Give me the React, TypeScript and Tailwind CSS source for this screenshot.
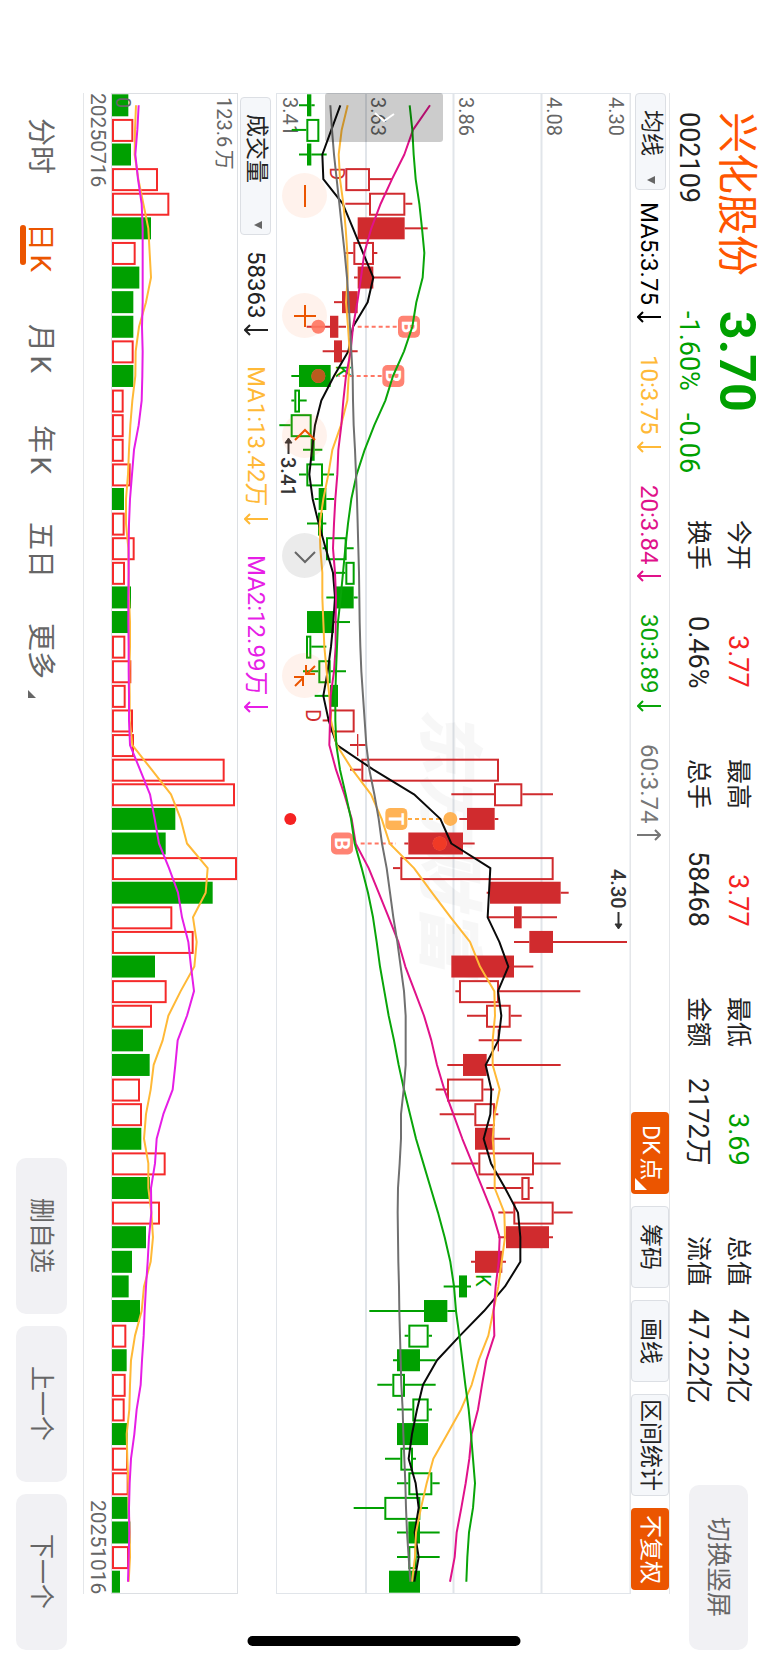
import type { ReactNode } from "react";

const ROW = 1501 / 61;
const rowCenter = (i: number) => ROW * i + ROW / 2;

const RED = "#d02b2e";
const GREEN = "#00a000";

// low, body start, body end, high (thirds of a unit), R/G = hollow, F/S = filled
type Candle = [number, number, number, number, "R" | "F" | "G" | "S"];

const candles: Candle[] = [
  [117, 141, 154, 164, "S"],
  [95, 139, 178, 178, "G"],
  [117, 141, 154, 200, "S"],
  [256, 256, 330, 396, "R"],
  [256, 327, 436, 457, "R"],
  [293, 293, 434, 503, "F"],
  [256, 280, 342, 352, "R"],
  [282, 293, 340, 422, "F"],
  [222, 246, 293, 293, "F"],
  [140, 210, 235, 258, "F"],
  [188, 222, 246, 293, "F"],
  [94, 117, 212, 212, "S"],
  [94, 103, 120, 140, "G"],
  [58, 92, 155, 155, "G"],
  [129, 152, 164, 187, "S"],
  [117, 139, 189, 222, "G"],
  [164, 176, 199, 222, "S"],
  [141, 174, 189, 199, "G"],
  [188, 198, 260, 281, "G"],
  [225, 256, 284, 284, "G"],
  [199, 228, 281, 293, "S"],
  [141, 141, 222, 270, "S"],
  [138, 138, 154, 199, "G"],
  [129, 175, 212, 258, "G"],
  [164, 210, 234, 234, "S"],
  [188, 210, 284, 284, "R"],
  [270, 291, 295, 317, "F"],
  [270, 304, 717, 717, "R"],
  [574, 702, 787, 879, "R"],
  [598, 621, 704, 715, "F"],
  [433, 445, 609, 644, "F"],
  [399, 421, 881, 881, "R"],
  [680, 690, 902, 926, "F"],
  [684, 762, 785, 891, "F"],
  [762, 808, 879, 1101, "F"],
  [574, 574, 762, 820, "F"],
  [586, 597, 717, 961, "R"],
  [621, 678, 752, 785, "R"],
  [656, 713, 717, 785, "F"],
  [562, 609, 680, 902, "F"],
  [527, 561, 670, 702, "R"],
  [539, 643, 705, 715, "R"],
  [645, 645, 703, 750, "F"],
  [574, 655, 822, 902, "R"],
  [679, 784, 809, 820, "R"],
  [715, 760, 881, 938, "R"],
  [715, 738, 867, 879, "F"],
  [633, 645, 727, 738, "F"],
  [551, 597, 621, 633, "S"],
  [328, 492, 562, 586, "S"],
  [434, 445, 506, 516, "G"],
  [399, 411, 480, 527, "S"],
  [352, 397, 435, 527, "G"],
  [411, 457, 506, 516, "G"],
  [411, 411, 504, 504, "S"],
  [375, 421, 459, 468, "G"],
  [411, 445, 517, 539, "G"],
  [281, 373, 481, 504, "G"],
  [411, 445, 480, 539, "S"],
  [411, 445, 470, 539, "G"],
  [387, 387, 480, 480, "S"],
];

const ma5 = [
  241, 214, 187, 190, 248, 279, 309, 340, 323, 279, 265, 222, 184, 165, 156,
  148, 158, 176, 197, 219, 225, 220, 213, 203, 190, 206, 231, 340, 462, 541,
  574, 691, 687, 683, 718, 745, 714, 724, 715, 677, 694, 691, 671, 693, 735,
  774, 781, 781, 735, 672, 600, 531, 489, 471, 456, 446, 467, 476, 464, 476,
  463,
];
const ma10 = [
  263, 245, 236, 240, 250, 257, 262, 263, 258, 264, 269, 266, 262, 243, 217,
  205, 190, 179, 181, 187, 187, 190, 193, 200, 208, 213, 230, 277, 333, 365,
  389, 462, 516, 572, 630, 660, 703, 705, 698, 698, 719, 704, 698, 704, 704,
  733, 735, 725, 715, 700, 685, 656, 635, 603, 562, 520, 500, 483, 468, 465,
  456,
];
const ma20 = [
  510, 459, 433, 396, 362, 334, 313, 303, 292, 279, 272, 258, 250, 244, 235,
  232, 226, 222, 219, 225, 228, 227, 227, 222, 212, 210, 208, 228, 253, 275,
  287, 326, 356, 386, 415, 436, 464, 492, 514, 531, 553, 580, 607, 637, 667,
  697, 719, 716, 707, 701, 703, 679, 666, 654, 635, 628, 617, 604, 590, 584,
  570,
];
const ma30 = [
  449, 457, 461, 467, 478, 486, 493, 488, 469, 457, 432, 399, 376, 343, 314,
  290, 274, 264, 256, 249, 242, 234, 231, 228, 226, 226, 229, 240, 257, 273,
  284, 305, 324, 339, 350, 360, 373, 386, 402, 416, 432, 450, 468, 490, 512,
  534, 554, 571, 582, 588, 598, 607, 616, 626, 633, 639, 645, 639, 627, 622,
  619,
];
const ma60 = [
  211, 216, 222, 230, 238, 246, 254, 261, 266, 270, 274, 278, 279, 281, 285,
  288, 291, 293, 295, 297, 298, 299, 301, 304, 309, 314, 319, 328, 343, 356,
  366, 380, 390, 400, 412, 422, 432, 437, 437, 437, 431, 423, 423, 419, 414,
  413, 414, 415, 417, 418, 420, 422, 424, 428, 430, 433, 436, 438, 441, 446,
  451,
];

const volumes: [number, "R" | "G"][] = [
  [385, "G"], [400, "R"], [393, "G"], [474, "R"], [508, "R"], [453, "G"],
  [407, "R"], [418, "G"], [400, "G"], [400, "G"], [401, "R"], [400, "G"],
  [371, "R"], [371, "R"], [371, "R"], [392, "R"], [372, "G"], [374, "R"],
  [404, "R"], [375, "R"], [393, "G"], [385, "G"], [376, "R"], [394, "R"],
  [377, "R"], [399, "R"], [402, "R"], [674, "R"], [705, "R"], [526, "G"],
  [497, "G"], [711, "R"], [638, "G"], [517, "R"], [581, "R"], [465, "G"],
  [500, "R"], [456, "R"], [429, "G"], [449, "G"], [420, "R"], [426, "R"],
  [424, "G"], [497, "R"], [450, "G"], [480, "R"], [438, "G"], [396, "G"],
  [386, "G"], [420, "G"], [379, "R"], [380, "G"], [377, "R"], [374, "R"],
  [383, "G"], [384, "R"], [386, "R"], [383, "G"], [391, "G"], [387, "R"],
  [360, "G"],
];
const volMa1 = [
  408, 405, 404, 415, 430, 445, 449, 453, 438, 417, 407, 406, 397, 391, 387,
  384, 378, 378, 385, 386, 387, 390, 390, 388, 389, 389, 397, 455, 513, 542,
  561, 623, 617, 579, 590, 583, 542, 505, 488, 461, 452, 438, 432, 445, 445,
  454, 459, 452, 432, 425, 405, 393, 390, 388, 380, 382, 385, 386, 389, 390,
  386,
];
const volMa2 = [
  416, 412, 406, 414, 425, 428, 428, 428, 428, 426, 428, 427, 425, 416, 402,
  396, 390, 387, 386, 386, 385, 385, 386, 386, 387, 387, 390, 420, 450, 464,
  477, 507, 534, 546, 565, 573, 582, 561, 533, 526, 518, 490, 470, 465, 453,
  454, 447, 443, 438, 434, 431, 426, 422, 410, 403, 393, 389, 387, 388, 386,
  384,
];

const px = (v: number) => (v - 48) / 3;
const vx = (v: number) => (v - 333) / 3;

const Line = ({
  data,
  scale,
  color,
}: {
  data: number[];
  scale: (v: number) => number;
  color: string;
}) => (
  <polyline
    points={data.map((v, i) => `${scale(v)},${rowCenter(i)}`).join(" ")}
    fill="none"
    stroke={color}
    strokeWidth="2"
    strokeLinejoin="round"
  />
);

const Label = ({
  x,
  y,
  size = 20,
  color = "#666",
  weight = 400,
  opacity = 1,
  children,
}: {
  x: number;
  y: number;
  size?: number;
  color?: string;
  weight?: number;
  opacity?: number;
  children: ReactNode;
}) => (
  <text
    transform={`translate(${x} ${y}) rotate(90)`}
    fontSize={size}
    fill={color}
    fontWeight={weight}
    opacity={opacity}
  >
    {children}
  </text>
);

const Marker = ({
  row,
  box,
  dot,
  from,
  to,
  text,
  color,
}: {
  row: number;
  box: number;
  dot: number;
  from: number;
  to: number;
  text: string;
  color: string;
}) => {
  const y = rowCenter(row);
  return (
    <g>
      <path
        d={`M${px(from)} ${y}H${px(to)}`}
        stroke={color}
        strokeWidth="2"
        strokeDasharray="4 3"
      />
      <circle cx={px(dot)} cy={y} r="7" fill={color} opacity="0.9" />
      <rect
        x={px(box) - 11}
        y={y - 11}
        width="22"
        height="22"
        rx="5"
        fill={color}
        opacity="0.9"
      />
      <text
        transform={`translate(${px(box) - 7} ${y}) rotate(90)`}
        fontSize="20"
        fontWeight="700"
        fill="#fff"
        textAnchor="middle"
      >
        {text}
      </text>
    </g>
  );
};

const PriceChart = () => (
  <svg
    viewBox="0 0 354 1501"
    preserveAspectRatio="none"
    className="block h-full w-full [writing-mode:horizontal-tb]"
  >
    <g stroke="#e1e5ea" strokeWidth="2">
      <path d="M90 0V1501M177.5 0V1501M265.5 0V1501" />
      <path d="M0.5 0V1501M354 0V1501" strokeWidth="1" />
      <path d="M0 0.5H354M0 1500.5H354" strokeWidth="1" />
    </g>
    <g fontStyle="italic">
      <Label x={150} y={615} size={66} color="#000" weight={900} opacity={0.028}>
        东方财富
      </Label>
    </g>

    <Label x={7} y={4}>3.41</Label>
    <Label x={95} y={4}>3.63</Label>
    <Label x={183} y={4}>3.86</Label>
    <Label x={271} y={4}>4.08</Label>
    <Label x={333} y={4}>4.30</Label>

    {candles.map(([low, start, end, high, kind], i) => {
      const y = rowCenter(i);
      const color = kind === "R" || kind === "F" ? RED : GREEN;
      const hollow = kind === "R" || kind === "G";
      return (
        <g key={i} stroke={color} strokeWidth="2">
          <path d={`M${px(low)} ${y}H${px(start)}M${px(end)} ${y}H${px(high)}`} />
          {hollow ? (
            <rect
              x={px(start) + 1}
              y={y - 10}
              width={px(end) - px(start) - 2}
              height="21"
              fill="none"
            />
          ) : (
            <rect
              x={px(start)}
              y={y - 11}
              width={px(end) - px(start)}
              height="22"
              fill={color}
              stroke="none"
            />
          )}
        </g>
      );
    })}

    <Label x={54} y={74} color={RED}>D</Label>
    <Label x={30} y={616} color={RED}>D</Label>
    <Label x={60} y={272} color={GREEN}>K</Label>
    <Label x={200} y={1181} color={GREEN}>K</Label>

    <Marker row={9} box={447} dot={175} from={410} to={284} text="B" color="#ff7664" />
    <Marker row={11} box={400} dot={175} from={365} to={235} text="B" color="#ff7664" />
    <Marker row={29} box={409} dot={571} from={444} to={545} text="T" color="#ffab42" />
    <Marker row={30} box={246} dot={539} from={302} to={408} text="B" color="#ff7664" />
    <circle cx={px(175)} cy={rowCenter(11)} r="7" fill="#b85c1e" />
    <circle cx={px(539)} cy={rowCenter(30)} r="7" fill="#f03a26" />
    <circle cx={px(91)} cy={rowCenter(29)} r="6" fill="#f52222" />

    <Line data={ma5} scale={px} color="#0a0a0a" />
    <Line data={ma10} scale={px} color="#ffb937" />
    <Line data={ma20} scale={px} color="#e0128a" />
    <Line data={ma30} scale={px} color="#09a509" />
    <Line data={ma60} scale={px} color="#707070" />

    <g stroke="#333" strokeWidth="2" fill="#333">
      <path d="M12.5 361V349" />
      <path d="M12.5 345L9 350H16Z" strokeWidth="1" />
      <path d="M342.5 819V831" />
      <path d="M342.5 836L339 831H346Z" strokeWidth="1" />
    </g>
    <Label x={5} y={364} color="#333" weight={500}>3.41</Label>
    <Label x={335} y={776} color="#333" weight={500}>4.30</Label>

    <rect x="49" y="0" width="118" height="49" rx="3" fill="#000" opacity="0.2" />
    <path d="M99 20L108 28L118 21" fill="none" stroke="#fff" strokeWidth="2" />
  </svg>
);

const VolumeChart = () => (
  <svg
    viewBox="0 0 127 1501"
    preserveAspectRatio="none"
    className="block h-full w-full [text-autospace:normal] [writing-mode:horizontal-tb]"
  >
    <rect x="0.5" y="0.5" width="126" height="1500" fill="none" stroke="#dcdfe3" />
    {volumes.map(([end, kind], i) =>
      kind === "R" ? (
        <rect
          key={i}
          x="2"
          y={rowCenter(i) - 10}
          width={vx(end) - 3}
          height="21"
          fill="none"
          stroke="#f52a2a"
          strokeWidth="2"
        />
      ) : (
        <rect
          key={i}
          x="1"
          y={rowCenter(i) - 11}
          width={vx(end) - 1}
          height="22"
          fill={GREEN}
        />
      )
    )}
    <Label x={106} y={4}>123.6万</Label>
    <Label x={5} y={4}>0</Label>
    <Line data={volMa1} scale={vx} color="#ffb937" />
    <Line data={volMa2} scale={vx} color="#e61ee6" />
  </svg>
);

const Dropdown = ({ label, className }: { label: string; className: string }) => (
  <div className={`relative shrink-0 ${className}`}>
    <select
      aria-label={label}
      className="h-full w-full appearance-none rounded border border-[#dcdfe4] bg-[#f5f7fa] pt-4 text-[23px] leading-7 text-[#222]"
    >
      <option>{label}</option>
    </select>
    <svg viewBox="0 0 8 8" className="pointer-events-none absolute bottom-1.5 left-3 size-2">
      <path d="M0 4L8 0V8Z" fill="#666" />
    </svg>
  </div>
);

const Quote = ({
  label,
  value,
  color = "text-[#222]",
}: {
  label: string;
  value: string;
  color?: string;
}) => (
  <div className="flex h-[168px] items-center justify-between">
    <span className="text-[25px] leading-10">{label}</span>
    <span className={`text-[27px] leading-10 ${color}`}>{value}</span>
  </div>
);

const Average = ({
  text,
  up = false,
  color,
}: {
  text: string;
  up?: boolean;
  color: string;
}) => (
  <span className={`flex items-center gap-1.5 whitespace-nowrap ${color}`}>
    {text}
    <svg
      viewBox="0 0 24 12"
      className="h-3 w-6"
      fill="none"
      stroke="currentColor"
      strokeWidth="2"
    >
      <path d={up ? "M0 6H23M18 1L23 6L18 11" : "M24 6H1M6 1L1 6L6 11"} />
    </svg>
  </span>
);

const tools = [
  { name: "DK点", active: true, size: "h-[82px]", more: true },
  { name: "筹码", active: false, size: "h-[82px]" },
  { name: "画线", active: false, size: "h-[82px]" },
  { name: "区间统计", active: false, size: "h-[102px]" },
  { name: "不复权", active: true, size: "h-[82px]" },
];

const periods = ["分时", "日K", "月K", "年K", "五日", "更多"];

const controls: { name: string; color: string; d: string }[] = [
  { name: "缩小", color: "bg-[#ff8040]/10 text-[#eb5500]", d: "M11 0V22" },
  { name: "放大", color: "bg-[#ff8040]/10 text-[#eb5500]", d: "M11 0V22M0 11H22" },
  { name: "左移", color: "bg-[#ff8040]/10 text-[#eb5500]", d: "M1 15L11 5L21 15" },
  { name: "右移", color: "bg-black/8 text-[#666]", d: "M1 7L11 17L21 7" },
  {
    name: "收起",
    color: "bg-[#ff8040]/10 text-[#eb5500]",
    d: "M21 1L13 9M12 0V9H21M1 21L9 13M0 12H9V21",
  },
];

export default function App() {
  return (
    <main className="relative flex h-screen min-h-[1600px] w-full flex-col bg-white font-['Roboto','Noto_Sans_CJK_SC',sans-serif] text-[#222] [text-orientation:sideways] [writing-mode:vertical-rl]">
      <header className="flex w-[98px] shrink-0 items-center pt-28 pr-0.5 pb-[13px]">
        <div className="w-24 shrink-0 pr-1">
          <div className="flex h-[408px] items-center">
            <h1 className="h-[199px] text-[41px] leading-[50px] text-[#ff5500]">兴化股份</h1>
            <strong className="text-[50px] leading-[50px] font-bold text-[#00a000]">3.70</strong>
          </div>
          <div className="flex items-center text-[27px] leading-[46px]">
            <span className="h-[199px]">002109</span>
            <span className="h-[102px] text-[#00a000]">-1.60%</span>
            <span className="text-[#00a000]">-0.06</span>
          </div>
        </div>
        <div className="flex w-20 flex-1 justify-between">
          <div>
            <Quote label="今开" value="3.77" color="text-[#f52222]" />
            <Quote label="换手" value="0.46%" />
          </div>
          <div>
            <Quote label="最高" value="3.77" color="text-[#f52222]" />
            <Quote label="总手" value="58468" />
          </div>
          <div>
            <Quote label="最低" value="3.69" color="text-[#00a000]" />
            <Quote label="金额" value="2172万" />
          </div>
          <div>
            <Quote label="总值" value="47.22亿" />
            <Quote label="流值" value="47.22亿" />
          </div>
        </div>
        <button
          type="button"
          className="mt-[81px] h-[165px] w-[59px] shrink-0 rounded-[10px] bg-[#f1f1f4] text-[25px] text-[#666]"
        >
          切换竖屏
        </button>
      </header>

      <div className="mt-[93px] mb-[69px] flex w-10 shrink-0 items-center border-r border-l border-[#e4e6e9] pb-1">
        <Dropdown label="均线" className="h-[97px] w-[31px]" />
        <div className="flex flex-1 gap-8 pt-3 pr-0.5 text-2xl">
          <Average text="MA5:3.75" color="text-black" />
          <Average text="10:3.75" color="text-[#ffb937]" />
          <Average text="20:3.84" color="text-[#e0128a]" />
          <Average text="30:3.89" color="text-[#09a509]" />
          <Average text="60:3.74" up color="text-[#777]" />
        </div>
        <div className="flex shrink-0 gap-3">
          {tools.map((tool) => (
            <button
              key={tool.name}
              type="button"
              className={`relative w-[38px] rounded text-[23px] whitespace-nowrap [text-autospace:normal] ${tool.size} ${
                tool.active
                  ? "bg-[#eb5500] text-white"
                  : "border border-[#dcdfe4] bg-[#f5f7fa] text-[#222]"
              }`}
            >
              {tool.name}
              {tool.more && (
                <svg viewBox="0 0 12 12" className="absolute bottom-1 left-1 size-3">
                  <path d="M0 0L12 12H0Z" fill="#fff" />
                </svg>
              )}
            </button>
          ))}
        </div>
      </div>

      <section className="relative mt-[93px] mb-[69px] min-w-0 flex-1">
        <PriceChart />
        <div className="absolute top-20 left-1.5 flex gap-[75px]">
          {controls.map((control) => (
            <button
              key={control.name}
              type="button"
              aria-label={control.name}
              className={`flex size-[45px] items-center justify-center rounded-full ${control.color}`}
            >
              <svg
                viewBox="0 0 22 22"
                className="size-[22px]"
                fill="none"
                stroke="currentColor"
                strokeWidth="2"
              >
                <path d={control.d} />
              </svg>
            </button>
          ))}
        </div>
      </section>

      <div className="mt-[97px] flex w-[38px] shrink-0 items-center text-2xl">
        <Dropdown label="成交量" className="h-[138px] w-[31px]" />
        <div className="flex gap-[30px] pt-4 pr-0.5">
          <Average text="58363" color="text-[#222]" />
          <Average text="MA1:13.42万" color="text-[#ffb937]" />
          <Average text="MA2:12.99万" color="text-[#e61ee6]" />
        </div>
      </div>

      <section className="mt-[93px] mb-[69px] w-[127px] shrink-0">
        <VolumeChart />
      </section>

      <div className="mt-[93px] mb-[69px] flex w-7 shrink-0 items-center justify-between border-l border-[#e4e6e9] text-[21px] leading-6 text-[#666]">
        <time dateTime="2025-07-16">20250716</time>
        <time dateTime="2025-10-16">20251016</time>
      </div>

      <footer className="flex w-[83px] shrink-0 items-center justify-between pt-24 pb-[13px]">
        <nav className="flex pr-1">
          {periods.map((period) => (
            <a
              key={period}
              href="#"
              className={`relative h-[101px] text-center text-[28px] leading-10 whitespace-nowrap [text-autospace:normal] ${
                period === "日K" ? "text-[#eb5500]" : "text-[#666]"
              }`}
            >
              {period}
              {period === "日K" && (
                <span className="absolute top-7 left-0 h-10 w-1.5 rounded-full bg-[#eb5500]" />
              )}
              {period === "更多" && (
                <svg viewBox="0 0 8 8" className="absolute bottom-1 left-2 size-2">
                  <path d="M0 0L8 8H0Z" fill="#666" />
                </svg>
              )}
            </a>
          ))}
        </nav>
        <div className="flex gap-3">
          {["删自选", "上一个", "下一个"].map((name) => (
            <button
              key={name}
              type="button"
              className="h-[156px] w-[51px] rounded-[10px] bg-[#f1f1f4] text-[25px] text-[#666]"
            >
              {name}
            </button>
          ))}
        </div>
      </footer>

      <div className="absolute bottom-[17px] left-1/2 h-2.5 w-[273px] -translate-x-1/2 rounded-full bg-black" />
    </main>
  );
}
